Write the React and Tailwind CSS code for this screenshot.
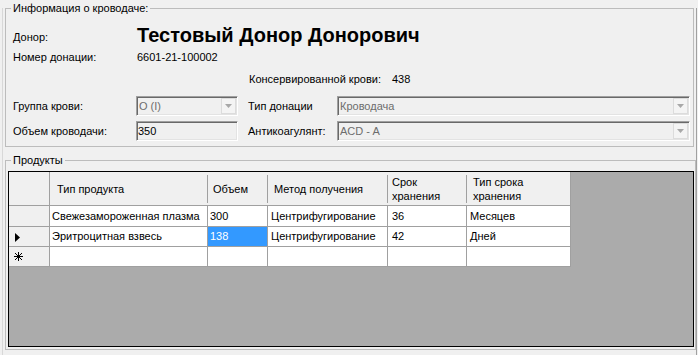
import React from "react";

const columns = [
  { title: ["Тип продукта"], width: 158, headPad: 7, cellPad: 2 },
  { title: ["Объем"], width: 60, headPad: 5, cellPad: 2 },
  { title: ["Метод получения"], width: 120, headPad: 6, cellPad: 3 },
  { title: ["Срок", "хранения"], width: 79, headPad: 4, cellPad: 4 },
  { title: ["Тип срока", "хранения"], width: 104, headPad: 6, cellPad: 3 },
];

const rows = [
  { cells: ["Свежезамороженная плазма", "300", "Центрифугирование", "36", "Месяцев"], height: 21 },
  { cells: ["Эритроцитная взвесь", "138", "Центрифугирование", "42", "Дней"], height: 20, current: true, selected: 1 },
  { cells: ["", "", "", "", ""], height: 20, isNew: true },
];

function DropButton() {
  return (
    <div className="ml-auto mr-[1px] flex h-[16px] w-[15px] items-center justify-center border border-[#dcdcdc] bg-[#f4f4f4]">
      <svg width="7" height="4" viewBox="0 0 7 4">
        <path d="M0 0H7L3.5 4Z" fill="#a8a8a8" />
      </svg>
    </div>
  );
}

function Combo({ value, width }) {
  return (
    <div
      className="flex h-[20px] items-center border border-t-[#a0a0a0] border-l-[#a0a0a0] border-r-[#ffffff] border-b-[#ffffff] bg-[#f0f0f0] shadow-[inset_1px_1px_0_#696969,inset_-1px_-1px_0_#e3e3e3]"
      style={{ width }}
    >
      <span className="pl-[2px] text-[#6d6d6d]">{value}</span>
      <DropButton />
    </div>
  );
}

function TextBox({ value, width }) {
  return (
    <div
      className="flex h-[20px] items-center border border-t-[#a0a0a0] border-l-[#a0a0a0] border-r-[#ffffff] border-b-[#ffffff] bg-[#f0f0f0] shadow-[inset_1px_1px_0_#696969,inset_-1px_-1px_0_#e3e3e3]"
      style={{ width }}
    >
      <span className="pl-[1px] text-black">{value}</span>
    </div>
  );
}

function GroupBox({ title, className, children }) {
  return (
    <div className={`relative border border-[#bcbcbc] ${className}`}>
      <span className="absolute -top-[7px] left-[5px] bg-[#f0f0f0] px-[2px] leading-[13px] text-black">
        {title}
      </span>
      {children}
    </div>
  );
}

function Asterisk() {
  return (
    <svg width="9" height="9" viewBox="0 0 9 9" shapeRendering="crispEdges">
      <path d="M4.5 0V9M0 4.5H9M1 1L8 8M8 1L1 8" stroke="#000" strokeWidth="1" />
    </svg>
  );
}

function Arrow() {
  return (
    <svg width="5" height="9" viewBox="0 0 5 9">
      <path d="M0 0L5 4.5L0 9Z" fill="#000" />
    </svg>
  );
}

export default function App() {
  return (
    <div className="h-[355px] w-[698px] overflow-hidden bg-[#f0f0f0] text-[11px] leading-[13px] text-black [font-family:'Liberation_Sans',Arial,sans-serif]">
      <div className="ml-[2px] h-[353px] w-[695px] border-b border-l border-r border-b-[#d8d8d8] border-l-[#d8d8d8] border-r-[#a0a0a0] pl-[2px]">

        <GroupBox title="Информация о кроводаче:" className="mt-[8px] h-[139px] w-[689px]">
          <div className="pl-[7px]">

            <div className="mt-[14px] flex h-[24px]">
              <div className="w-[124px] pt-[8px]">Донор:</div>
              <div className="text-[20px] font-bold leading-[24px]">
                Тестовый Донор Донорович
              </div>
            </div>

            <div className="mt-[4px] flex">
              <div className="w-[124px]">Номер донации:</div>
              <div>6601-21-100002</div>
            </div>

            <div className="mt-[9px] flex pl-[236px]">
              <div className="w-[143px]">Консервированной крови:</div>
              <div>438</div>
            </div>

            <div className="mt-[10px] flex items-center">
              <div className="w-[123px]">Группа крови:</div>
              <Combo value="O (I)" width={102} />
              <div className="ml-[10px] w-[89px]">Тип донации</div>
              <Combo value="Кроводача" width={353} />
            </div>

            <div className="mt-[5px] flex items-center">
              <div className="w-[123px]">Объем кроводачи:</div>
              <TextBox value="350" width={102} />
              <div className="ml-[10px] w-[89px]">Антикоагулянт:</div>
              <Combo value="ACD - A" width={353} />
            </div>

          </div>
        </GroupBox>

        <GroupBox title="Продукты" className="mt-[13px] h-[190px] w-[691px]">
          <div className="ml-[2px] mt-[10px] h-[176px] w-[686px] border border-black bg-[#ababab]">
            <div className="grid w-[562px] grid-cols-[41px_158px_60px_120px_79px_104px]">

              <div className="h-[34px] border-b border-r border-[#a0a0a0] bg-[#f0f0f0]" />
              {columns.map((col, i) => (
                <div
                  key={col.title.join(" ")}
                  className="relative flex h-[34px] flex-col justify-center border-b border-[#a0a0a0] bg-[#f0f0f0]"
                  style={{ paddingLeft: col.headPad }}
                >
                  {col.title.map((line) => (
                    <div key={line} className="leading-[14px]">{line}</div>
                  ))}
                  {i < columns.length - 1 ? (
                    <div className="absolute right-0 top-[3px] h-[28px] w-px bg-[#a0a0a0]" />
                  ) : (
                    <div className="absolute right-0 top-0 h-[33px] w-px bg-[#a0a0a0]" />
                  )}
                </div>
              ))}

              {rows.map((row, r) => (
                <React.Fragment key={r}>
                  <div
                    className="flex items-center border-b border-r border-[#a0a0a0] bg-[#f0f0f0]"
                    style={{ height: row.height }}
                  >
                    {row.current && <div className="pl-[6px] pt-[1px]"><Arrow /></div>}
                    {row.isNew && <div className="pl-[5px]"><Asterisk /></div>}
                  </div>
                  {row.cells.map((cell, c) => (
                    <div
                      key={c}
                      className={`flex items-center border-b border-r border-[#a0a0a0] ${
                        row.selected === c ? "bg-[#3399ff] text-white" : "bg-white"
                      }`}
                      style={{ height: row.height, paddingLeft: columns[c].cellPad }}
                    >
                      {cell}
                    </div>
                  ))}
                </React.Fragment>
              ))}

            </div>
          </div>
        </GroupBox>

      </div>
    </div>
  );
}
